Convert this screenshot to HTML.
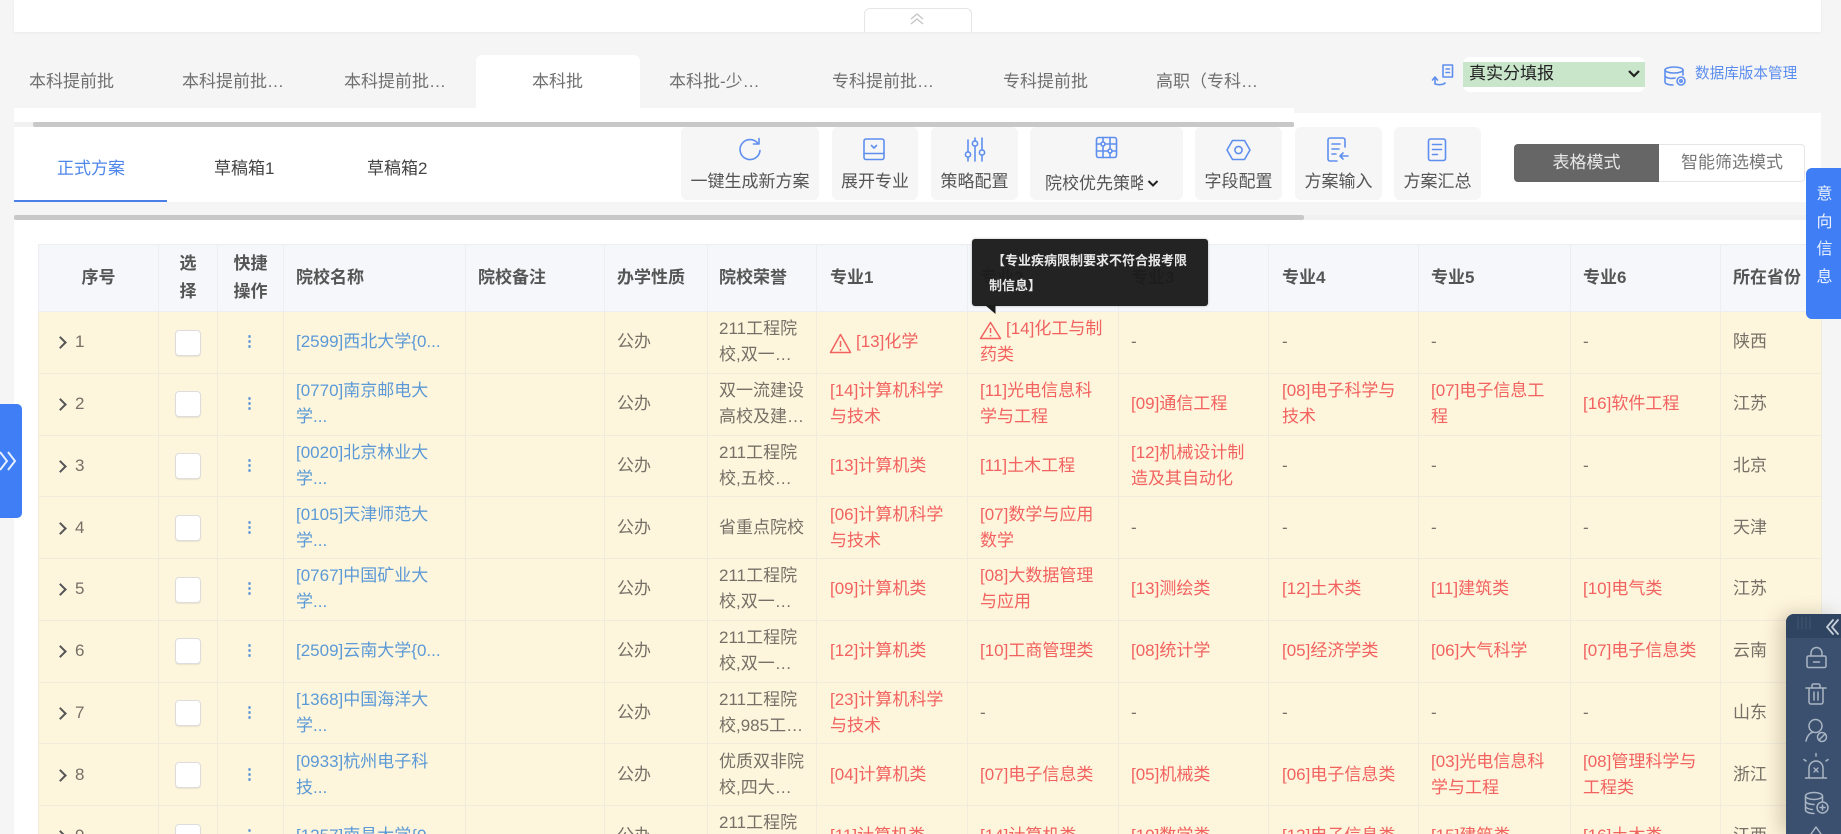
<!DOCTYPE html>
<html lang="zh"><head><meta charset="utf-8"><title>本科批</title>
<style>
*{box-sizing:border-box}
html,body{margin:0;padding:0;width:1841px;height:834px;overflow:hidden;background:#f5f5f5;font-family:"Liberation Sans","Noto Sans CJK SC",sans-serif;color:#666}
#w{position:relative;width:1841px;height:834px;overflow:hidden;background:#f5f5f5}
.a{position:absolute}
.t{position:absolute;white-space:nowrap;font-size:17px;line-height:24px;color:#707070}
.btn{position:absolute;top:127px;height:73px;background:#f6f6f6;border-radius:6px;text-align:center;font-size:17px;color:#555;padding-top:43px;line-height:24px;white-space:nowrap}
table{position:absolute;left:38px;top:244px;width:1783px;border-collapse:collapse;table-layout:fixed}
th{height:67px;background:#f5f7fa;border:1px solid #eceef2;font-size:17px;line-height:28px;font-weight:700;color:#555;text-align:left;padding:0 0 0 12px;white-space:nowrap}
td{height:61.75px;background:#fef5dd;border:1px solid #f1ebdc;font-size:17px;line-height:26px;color:#767066;padding:0 0 0 12px;white-space:nowrap;overflow:hidden}
th:nth-child(7),td:nth-child(7){padding-left:11px}
th:nth-child(8),td:nth-child(8),th:nth-child(11),td:nth-child(11){padding-left:13px}
th.c{text-align:center;padding:0}
td.n{padding-left:36px;position:relative;font-size:17px}
td.n:before{content:"";position:absolute;left:17px;top:50%;margin-top:-4px;width:7px;height:7px;border-top:2px solid #555;border-right:2px solid #555;transform:rotate(45deg)}
td.k{padding:0;text-align:center}
.cb{display:inline-block;width:26px;height:26px;background:#fff;border:1px solid #ddd;border-radius:4px;vertical-align:middle;box-shadow:0 1px 1px rgba(0,0,0,.08)}
td.d{padding:0 2px 0 0;text-align:center;color:#4e8ed6;font-weight:700;font-size:15px}
td.u{color:#5b9ad6}
td.r{color:#f2625f}
</style></head><body><div id="w">
<div class="a" style="left:14px;top:0;width:1807px;height:32px;background:#fff;box-shadow:0 1px 3px rgba(0,0,0,.05)"></div>
<div class="a" style="left:864px;top:8px;width:108px;height:24px;background:#fff;border:1px solid #e6e6e6;border-bottom:0;border-radius:6px 6px 0 0"></div>

<div class="a" style="left:14px;top:108px;width:1280px;height:14px;background:#fff"></div>
<div class="a" style="left:476px;top:55px;width:164px;height:53px;background:#fff;border-radius:6px 6px 0 0"></div>
<div class="t" style="left:29px;top:70px">本科提前批</div>
<div class="t" style="left:182px;top:70px">本科提前批…</div>
<div class="t" style="left:344px;top:70px">本科提前批…</div>
<div class="t" style="left:532px;top:70px">本科批</div>
<div class="t" style="left:669px;top:70px">本科批-少…</div>
<div class="t" style="left:832px;top:70px">专科提前批…</div>
<div class="t" style="left:1003px;top:70px">专科提前批</div>
<div class="t" style="left:1156px;top:70px">高职（专科…</div>

<div class="a" style="left:14px;top:122px;width:1280px;height:5px;background:#f1f1f1"></div>
<div class="a" style="left:33px;top:122px;width:1261px;height:5px;background:#c8c8c8;border-radius:2px"></div>

<div class="a" style="left:1294px;top:113px;width:527px;height:14px;background:#fff"></div>
<div class="a" style="left:1463px;top:57px;width:182px;height:35px;background:#fff;border-radius:7px"></div>
<div class="a" style="left:1463px;top:62px;width:182px;height:25px;background:#c9e6cb"></div>
<div class="t" style="left:1469px;top:62px;color:#222">真实分填报</div>
<div class="t" style="left:1695px;top:62px;font-size:14.6px;color:#5b8dee">数据库版本管理</div>

<div class="a" style="left:14px;top:127px;width:1807px;height:75px;background:#fff"></div>
<div class="a" style="left:14px;top:200px;width:153px;height:2px;background:#4a80e8"></div>
<div class="t" style="left:57px;top:157px;color:#4f86ea">正式方案</div>
<div class="t" style="left:214px;top:157px;color:#444">草稿箱1</div>
<div class="t" style="left:367px;top:157px;color:#444">草稿箱2</div>

<div class="btn" style="left:681px;width:138px">一键生成新方案</div>
<div class="btn" style="left:832px;width:86px">展开专业</div>
<div class="btn" style="left:931px;width:87px">策略配置</div>
<div class="btn" style="left:1030px;width:153px"></div>
<div class="t" style="left:1045px;top:172px;width:98px;overflow:hidden;color:#555">院校优先策略</div>
<div class="btn" style="left:1195px;width:87px">字段配置</div>
<div class="btn" style="left:1295px;width:87px">方案输入</div>
<div class="btn" style="left:1394px;width:87px">方案汇总</div>

<div class="a" style="left:1514px;top:144px;width:291px;height:38px;background:#fff;border:1px solid #e6e6e6;border-radius:4px"></div>
<div class="a" style="left:1514px;top:144px;width:145px;height:38px;background:#666;border-radius:4px 0 0 4px;color:#e8e8e8;text-align:center;font-size:17px;line-height:38px">表格模式</div>
<div class="a" style="left:1659px;top:144px;width:146px;height:38px;color:#777;text-align:center;font-size:17px;line-height:38px">智能筛选模式</div>

<div class="a" style="left:14px;top:202px;width:1807px;height:13px;background:#f5f5f5"></div>
<div class="a" style="left:14px;top:215px;width:1807px;height:5px;background:#f1f1f1"></div>
<div class="a" style="left:14px;top:215px;width:1290px;height:5px;background:#c8c8c8;border-radius:2px"></div>
<div class="a" style="left:14px;top:220px;width:1807px;height:614px;background:#fff"></div>

<table>
<colgroup><col style="width:120px"><col style="width:59px"><col style="width:66px"><col style="width:182px"><col style="width:139px"><col style="width:103px"><col style="width:109px"><col style="width:151px"><col style="width:151px"><col style="width:150px"><col style="width:150px"><col style="width:152px"><col style="width:150px"><col style="width:101px"></colgroup>
<tr><th class="c">序号</th><th class="c">选<br>择</th><th class="c">快捷<br>操作</th><th>院校名称</th><th>院校备注</th><th>办学性质</th><th>院校荣誉</th><th>专业1</th><th>专业2</th><th>专业3</th><th>专业4</th><th>专业5</th><th>专业6</th><th>所在省份</th></tr>
<tr><td class="n">1</td><td class="k"><span class="cb"></span></td><td class="d">⋮</td><td class="u">[2599]西北大学{0...</td><td></td><td>公办</td><td>211工程院<br>校,双一…</td><td class="r"><span style="padding-left:26px">[13]化学</span></td><td class="r"><span style="padding-left:26px">[14]化工与制</span><br>药类</td><td>-</td><td>-</td><td>-</td><td>-</td><td>陕西</td></tr>
<tr><td class="n">2</td><td class="k"><span class="cb"></span></td><td class="d">⋮</td><td class="u">[0770]南京邮电大<br>学...</td><td></td><td>公办</td><td>双一流建设<br>高校及建…</td><td class="r">[14]计算机科学<br>与技术</td><td class="r">[11]光电信息科<br>学与工程</td><td class="r">[09]通信工程</td><td class="r">[08]电子科学与<br>技术</td><td class="r">[07]电子信息工<br>程</td><td class="r">[16]软件工程</td><td>江苏</td></tr>
<tr><td class="n">3</td><td class="k"><span class="cb"></span></td><td class="d">⋮</td><td class="u">[0020]北京林业大<br>学...</td><td></td><td>公办</td><td>211工程院<br>校,五校…</td><td class="r">[13]计算机类</td><td class="r">[11]土木工程</td><td class="r">[12]机械设计制<br>造及其自动化</td><td>-</td><td>-</td><td>-</td><td>北京</td></tr>
<tr><td class="n">4</td><td class="k"><span class="cb"></span></td><td class="d">⋮</td><td class="u">[0105]天津师范大<br>学...</td><td></td><td>公办</td><td>省重点院校</td><td class="r">[06]计算机科学<br>与技术</td><td class="r">[07]数学与应用<br>数学</td><td>-</td><td>-</td><td>-</td><td>-</td><td>天津</td></tr>
<tr><td class="n">5</td><td class="k"><span class="cb"></span></td><td class="d">⋮</td><td class="u">[0767]中国矿业大<br>学...</td><td></td><td>公办</td><td>211工程院<br>校,双一…</td><td class="r">[09]计算机类</td><td class="r">[08]大数据管理<br>与应用</td><td class="r">[13]测绘类</td><td class="r">[12]土木类</td><td class="r">[11]建筑类</td><td class="r">[10]电气类</td><td>江苏</td></tr>
<tr><td class="n">6</td><td class="k"><span class="cb"></span></td><td class="d">⋮</td><td class="u">[2509]云南大学{0...</td><td></td><td>公办</td><td>211工程院<br>校,双一…</td><td class="r">[12]计算机类</td><td class="r">[10]工商管理类</td><td class="r">[08]统计学</td><td class="r">[05]经济学类</td><td class="r">[06]大气科学</td><td class="r">[07]电子信息类</td><td>云南</td></tr>
<tr><td class="n">7</td><td class="k"><span class="cb"></span></td><td class="d">⋮</td><td class="u">[1368]中国海洋大<br>学...</td><td></td><td>公办</td><td>211工程院<br>校,985工…</td><td class="r">[23]计算机科学<br>与技术</td><td>-</td><td>-</td><td>-</td><td>-</td><td>-</td><td>山东</td></tr>
<tr><td class="n">8</td><td class="k"><span class="cb"></span></td><td class="d">⋮</td><td class="u">[0933]杭州电子科<br>技...</td><td></td><td>公办</td><td>优质双非院<br>校,四大…</td><td class="r">[04]计算机类</td><td class="r">[07]电子信息类</td><td class="r">[05]机械类</td><td class="r">[06]电子信息类</td><td class="r">[03]光电信息科<br>学与工程</td><td class="r">[08]管理科学与<br>工程类</td><td>浙江</td></tr>
<tr><td class="n">9</td><td class="k"><span class="cb"></span></td><td class="d">⋮</td><td class="u">[1257]南昌大学{0...</td><td></td><td>公办</td><td>211工程院<br>校,双一…</td><td class="r">[11]计算机类</td><td class="r">[14]计算机类</td><td class="r">[10]数学类</td><td class="r">[13]电子信息类</td><td class="r">[15]建筑类</td><td class="r">[16]土木类</td><td>江西</td></tr>
</table>

<div class="a" style="left:0;top:404px;width:22px;height:114px;background:#3f7ef5;border-radius:0 5px 5px 0"></div>
<div class="a" style="left:1806px;top:168px;width:35px;height:151px;background:#3f7ef5;border-radius:6px 0 0 6px;color:#eaf1ff;text-align:center;font-size:16px;line-height:27.5px;padding:13px 0 0 2px">意<br>向<br>信<br>息</div>

<div class="a" style="left:972px;top:239px;width:236px;height:67px;background:rgba(28,28,28,.97);border-radius:3px;box-shadow:0 0 2px rgba(0,0,0,.3);color:#e8e8e8;font-size:13px;font-weight:700;line-height:25px;padding:9px 10px 0 17px;white-space:nowrap"><span style="margin-left:3px">【专业疾病限制要求不符合报考限</span><br>制信息】</div>

<div class="a" style="left:1786px;top:614px;width:55px;height:220px;background:#3a506e;border-radius:8px 0 0 0;box-shadow:-6px 0 18px rgba(60,50,20,.22)"></div>
<div class="a" style="left:1786px;top:614px;width:55px;height:24px;background:#2f4461;border-radius:8px 0 0 0"></div>

<svg class="a" style="left:0;top:0" width="1841" height="834" viewBox="0 0 1841 834" fill="none">
<!-- tooltip arrow -->
<path d="M985 305h10.500v9z" fill="#1c1c1c"/>
<!-- top collapse -->
<g stroke="#c4c4c4" stroke-width="1.3"><path d="M911 19l6-5 6 5M911 24l6-5 6 5"/></g>
<!-- left chevrons -->
<g stroke="#e6efff" stroke-width="2"><path d="M0 452l7 9-7 9M8 452l7 9-7 9"/></g>
<!-- select arrow -->
<path d="M1629 71l5 5 5-5" stroke="#222" stroke-width="2.2"/>
<!-- strategy chevron -->
<path d="M1148.500 181l4.500 4.500 4.500-4.500" stroke="#222" stroke-width="2"/>
<g stroke="#5f8fee" stroke-width="1.6" stroke-linecap="round" stroke-linejoin="round">
<!-- swap -->
<path d="M1443 65h9.500v12h-9.500z"/><path d="M1446 69h3.500M1446 72.500h3.500"/><path d="M1435 84v-6M1432.500 80l2.500-3 2.500 3M1435 84c3 1 8 1 10-1"/>
<!-- database -->
<ellipse cx="1674" cy="70" rx="9" ry="3"/><path d="M1665 70v12c0 2 4 3 8 3M1683 70v5M1665 76c1 2 6 3 10 2"/><circle cx="1681" cy="81" r="4"/><circle cx="1681" cy="81" r="1.200"/>
<!-- refresh -->
<path d="M758 143.500a10 10 0 1 0 2 7"/><path d="M759 138.500v5.500h-5.500"/>
<!-- expand -->
<rect x="864" y="139" width="20" height="20.500" rx="2"/><path d="M864 153.500h20"/><path d="M871.500 145.500l2.500 2.500 2.500-2.500"/>
<!-- sliders -->
<path d="M968 140v11M968 158v3M975 138v3M975 146v15M982 138v11M982 156v5"/><circle cx="968" cy="154.500" r="2.600"/><circle cx="975" cy="143.500" r="2.600"/><circle cx="982" cy="152.500" r="2.600"/>
<!-- grid -->
<rect x="1096.500" y="137.500" width="20" height="20" rx="2"/><path d="M1103 137.500v20M1110 137.500v20M1096.500 144h20M1096.500 151h20"/><circle cx="1103" cy="144" r="2" fill="#f6f6f6"/><circle cx="1110" cy="151" r="2" fill="#f6f6f6"/>
<!-- hex -->
<path d="M1232.500 140.500h12l5.500 9.500-5.500 9.500h-12l-5.500-9.500z"/><circle cx="1238.500" cy="150" r="3.600"/>
<!-- input doc -->
<path d="M1345 147v-7a2 2 0 0 0-2-2h-13a2 2 0 0 0-2 2v19a2 2 0 0 0 2 2h7"/><path d="M1332 144h8M1332 149h7M1332 154h4"/><path d="M1348 156h-8M1343 153l-3 3 3 3"/>
<!-- summary doc -->
<rect x="1428.500" y="139" width="17" height="21.500" rx="2"/><path d="M1432.500 144.500h9M1432.500 149.500h9M1432.500 154.500h5"/>
</g>
<!-- warnings -->
<g stroke="#f2625f" stroke-width="1.500" stroke-linejoin="round">
<path d="M830.500 352.500l10-18 10 18z"/><path d="M840.500 341v6M840.500 349v1.500"/>
<path d="M980.500 338.500l10-16 10 16z"/><path d="M990.500 328v5M990.500 335v1.500"/>
</g>
<!-- panel icons -->
<g stroke="#aab5c4" stroke-width="1.500" stroke-linecap="round" stroke-linejoin="round">
<path d="M1798 617v12M1802 617v12M1806 617v12M1810 617v12" stroke="#41566f" stroke-width="1"/>
<path d="M1833 620l-6 7 6 7M1838 620l-6 7 6 7" stroke="#c6cfda" stroke-width="1.800"/>
<!-- lock -->
<rect x="1807" y="656" width="19" height="11.500" rx="1.500"/><path d="M1811 656v-3a5.500 5.500 0 0 1 11 0v3M1813.500 662h6"/>
<!-- trash -->
<path d="M1806 688h20M1812 688v-2.500a1.500 1.500 0 0 1 1.500-1.500h5a1.500 1.500 0 0 1 1.500 1.500v2.500M1809 688v14a2 2 0 0 0 2 2h10a2 2 0 0 0 2-2v-14M1814 692v8M1818 692v8"/>
<!-- user ban -->
<circle cx="1815.500" cy="726" r="6.500"/><path d="M1806 741c1-5 4-8 7-9"/><circle cx="1822" cy="737" r="4.500"/><path d="M1819 740l6-6"/>
<!-- alarm -->
<path d="M1809 777v-9a7 7 0 0 1 14 0v9M1805.500 778h21"/><path d="M1814 768l4 4M1818 768l-4 4" stroke-width="1.300"/><path d="M1816 756v-2.500M1806 761l-2-1.500M1826 761l2-1.500"/>
<!-- db plus -->
<ellipse cx="1814" cy="796" rx="8.500" ry="3.500"/><path d="M1805.500 796v14c0 2 4 3.500 8.500 3.500M1805.500 801c0 2 4 3.500 8.500 3.500M1805.500 806c0 2 4 3.500 7 3.500M1822.500 796v5"/><circle cx="1822.500" cy="807.500" r="5.500"/><path d="M1822.500 805v5M1820 807.500h5"/>
<!-- partial -->
<path d="M1811 834l5-7 5 7"/>
</g>
</svg>
</div></body></html>
